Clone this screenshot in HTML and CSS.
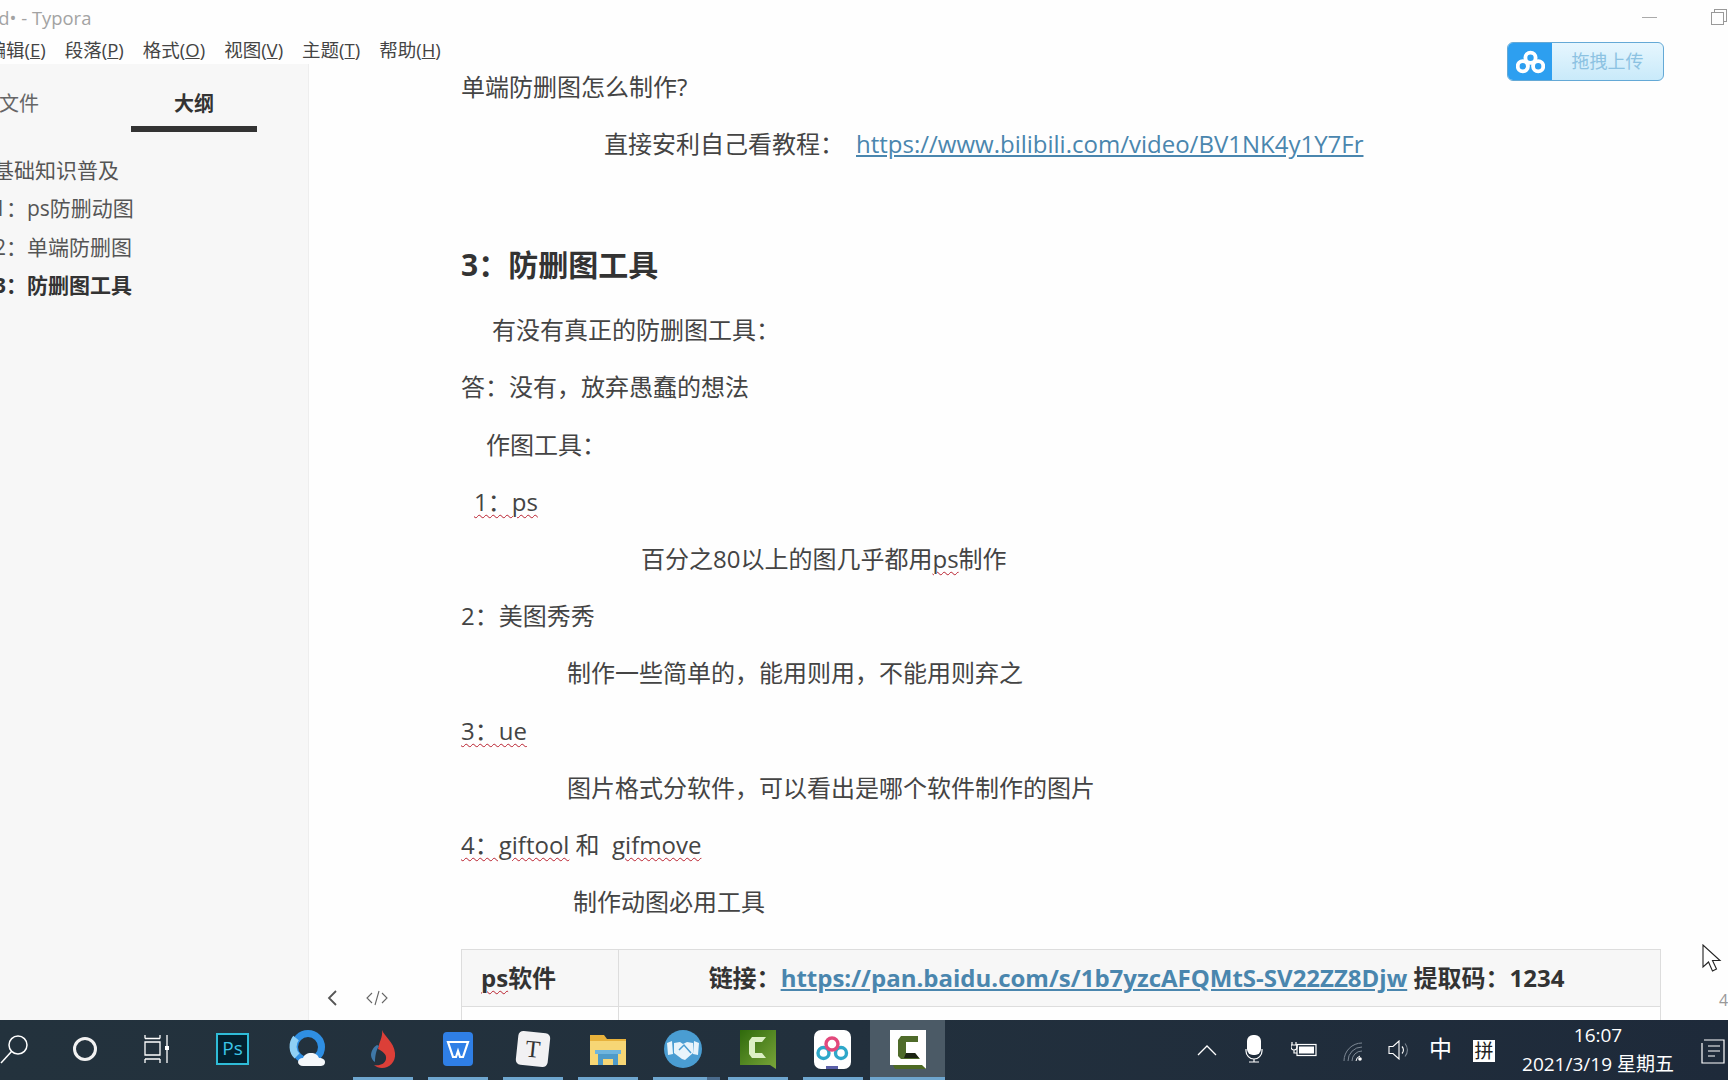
FILE: index.html
```html
<!DOCTYPE html>
<html lang="zh-CN">
<head>
    <meta charset="UTF-8">
    <title>Typora</title>
    <link rel="stylesheet" href="styles.css">
</head>
<body>
    <div class="window">
        <div class="titlebar">
            <span class="title">ed• - Typora</span>
            <div class="win-controls">
                <span class="win-min"></span>
                <span class="win-restore"></span>
            </div>
        </div>

        <div class="menubar">
            <span>编辑(<u>E</u>)</span>
            <span>段落(<u>P</u>)</span>
            <span>格式(<u>O</u>)</span>
            <span>视图(<u>V</u>)</span>
            <span>主题(<u>T</u>)</span>
            <span>帮助(<u>H</u>)</span>
        </div>

        <div class="main">
            <aside class="sidebar">
                <div class="tabs">
                    <div class="tab">文件</div>
                    <div class="tab active">大纲</div>
                </div>
                <ul class="outline">
                    <li>基础知识普及</li>
                    <li class="sub">1&#xFF1A;ps防删动图</li>
                    <li class="sub">2&#xFF1A;单端防删图</li>
                    <li class="sub current">3&#xFF1A;防删图工具</li>
                </ul>
            </aside>

            <div class="content">
                <p>单端防删图怎么制作?</p>
                <p class="in-link">直接安利自己看教程&#xFF1A;<a class="doc-link" href="#">https://www.bilibili.com/video/BV1NK4y1Y7Fr</a></p>
                <h3>3&#xFF1A;防删图工具</h3>
                <p class="in-28">有没有真正的防删图工具&#xFF1A;</p>
                <p>答&#xFF1A;没有&#xFF0C;放弃愚蠢的想法</p>
                <p class="in-25">作图工具&#xFF1A;</p>
                <p class="in-13"><span class="typo">1&#xFF1A;ps</span></p>
                <p class="in-180">百分之80以上的图几乎都用<span class="typo">ps</span>制作</p>
                <p>2&#xFF1A;美图秀秀</p>
                <p class="in-106">制作一些简单的&#xFF0C;能用则用&#xFF0C;不能用则弃之</p>
                <p><span class="typo">3&#xFF1A;ue</span></p>
                <p class="in-106">图片格式分软件&#xFF0C;可以看出是哪个软件制作的图片</p>
                <p><span class="typo">4&#xFF1A;giftool</span> 和&nbsp;&nbsp;<span class="typo">gifmove</span></p>
                <p class="in-112">制作动图必用工具</p>

                <table class="soft-table">
                    <tr>
                        <th class="col-name"><span class="typo">ps</span>软件</th>
                        <th class="col-link">链接&#xFF1A;<a class="doc-link" href="#">https://pan.baidu.com/s/1b7yzcAFQMtS-SV22ZZ8Djw</a> 提取码&#xFF1A;1234</th>
                    </tr>
                    <tr>
                        <td class="col-name empty"></td>
                        <td class="empty"></td>
                    </tr>
                </table>
            </div>
        </div>
    </div>

    <!-- stuff lying over the window -->
    <div class="upload-btn">
        <span class="upload-logo">
            <svg width="29" height="24" viewBox="0 0 34 28" fill="none" stroke="#fff" stroke-width="4.5">
                <circle cx="17" cy="9" r="6"/>
                <circle cx="8" cy="19" r="6"/>
                <circle cx="26" cy="19" r="6"/>
            </svg>
        </span>
        <span class="upload-text">拖拽上传</span>
    </div>

    <svg class="bottom-icon back-icon" width="14" height="18" viewBox="0 0 14 18" fill="none" stroke="#555" stroke-width="1.8">
        <path d="M11 2 4 9l7 7"/>
    </svg>
    <svg class="bottom-icon code-icon" width="24" height="16" viewBox="0 0 24 16" fill="none" stroke="#666" stroke-width="1.1">
        <path d="M7 3 2 8l5 5M17 3l5 5-5 5M14 1l-4 14"/>
    </svg>
    <span class="word-count">4</span>

    <svg class="cursor" width="20" height="28" viewBox="0 0 20 28">
        <path d="M1 1v22l5.500-5 4 9 4-2-4-8.500H18z" fill="#fff" stroke="#222" stroke-width="1.100"/>
    </svg>

    <div class="taskbar">
        <div class="task-btn small">
            <svg width="34" height="34" viewBox="0 0 34 34" fill="none" stroke="#fff" stroke-width="1.500">
                <circle cx="21" cy="13" r="9"/>
                <path d="M14.500 19.500 4 31"/>
            </svg>
        </div>
        <div class="task-btn small">
            <span class="cortana"></span>
        </div>
        <div class="task-btn small">
            <svg width="26" height="30" viewBox="0 0 26 30" fill="none" stroke="#fff" stroke-width="1.300">
                <path d="M2 4.500h15M2 1v3.500M17 1v3.500M2 8h15v13H2zM2 25h15M2 25v4M17 25v4M24 1v28"/>
                <rect x="22" y="12" width="4" height="4" fill="#fff" stroke="none"/>
            </svg>
        </div>

        <div class="task-btn first-app">
            <span class="ps-icon">Ps</span>
        </div>
        <div class="task-btn">
            <svg width="38" height="40" viewBox="0 0 38 40">
                <circle cx="19" cy="18" r="13.500" fill="none" stroke="#2f8fe3" stroke-width="7"/>
                <path d="M7 9a13.500 13.500 0 0 0 1 18" fill="none" stroke="#8fd0f5" stroke-width="7"/>
                <path d="M14 37c-3 0-5-2-5-4s2-4 5-4c1-3 4-5 8-5 4 0 7 2 8 5 4 0 6 2 6 4 0 3-2 4-5 4z" fill="#f4f7fa"/>
            </svg>
            <span class="run-bar none"></span>
        </div>
        <div class="task-btn">
            <svg width="30" height="40" viewBox="0 0 30 40">
                <path d="M14 1c2 6 12 12 13 23 1 9-6 15-13 15-3 0-6-1-8-3 6 1 11-1 12-6 1-5-4-8-8-10 1-7 5-12 4-19z" fill="#dc3f38"/>
                <path d="M9 16c-4 2-6 7-6 10 0 3 2 6 4 7 0-5 1-12 4-16z" fill="#3f78a8"/>
            </svg>
            <span class="run-bar"></span>
        </div>
        <div class="task-btn">
            <svg width="32" height="36" viewBox="0 0 32 36">
                <rect x="1" y="1" width="30" height="34" rx="4" fill="#2f7fe6"/>
                <path d="M6 11h20l-5 15h-3l-2-6-2 6h-3z" fill="none" stroke="#fff" stroke-width="2.200"/>
            </svg>
            <span class="run-bar"></span>
        </div>
        <div class="task-btn">
            <span class="typora-icon">T</span>
            <span class="run-bar"></span>
        </div>
        <div class="task-btn">
            <svg width="38" height="34" viewBox="0 0 38 34">
                <path d="M1 3h14l3 4h19v25H1z" fill="#e8b23c"/>
                <rect x="1" y="9" width="36" height="24" fill="#f7d675"/>
                <path d="M9 33V21h20v12h-5v-6H14v6z" fill="#4f9bc9"/>
                <rect x="6" y="18" width="26" height="4" fill="#6fb5de"/>
            </svg>
            <span class="run-bar"></span>
        </div>
        <div class="task-btn">
            <svg width="38" height="38" viewBox="0 0 38 38">
                <circle cx="19" cy="19" r="19" fill="#4a9dd2"/>
                <path d="M3 13l5-2 1 13-5 1zM35 13l-5-2-1 13 5 1z" fill="#e8f4fb"/>
                <path d="M10 13l6-1 3 2 4-2 6 1 0 10-8 7-3-1-8-6z" fill="#e8f4fb"/>
                <path d="M15 20l5-5 7 8" fill="none" stroke="#4a9dd2" stroke-width="1.500"/>
            </svg>
            <span class="run-bar double"></span>
        </div>
        <div class="task-btn">
            <svg width="36" height="39" viewBox="0 0 36 39">
                <defs>
                    <linearGradient id="camGreen" x1="0" y1="0" x2="1" y2="1">
                        <stop offset="0" stop-color="#2f6a0c"/>
                        <stop offset="1" stop-color="#7aa63a"/>
                    </linearGradient>
                </defs>
                <path d="M0 0h36v39l-6-4H0z" fill="url(#camGreen)"/>
                <path d="M26 7H12L9 11v13l3 4h14l-4-5h-7V12h7z" fill="#dcefc4"/>
            </svg>
            <span class="run-bar"></span>
        </div>
        <div class="task-btn">
            <svg width="37" height="39" viewBox="0 0 37 39">
                <rect width="37" height="39" rx="7" fill="#fff"/>
                <g fill="none" stroke-width="3.400">
                    <circle cx="9.500" cy="23" r="5.500" stroke="#2ea7c9"/>
                    <circle cx="27" cy="23" r="5.500" stroke="#2ea7c9"/>
                    <circle cx="18" cy="14" r="6" stroke="#e2497c"/>
                </g>
                <rect x="12" y="36" width="12" height="3" fill="#5a5fa8"/>
            </svg>
            <span class="run-bar"></span>
        </div>
        <div class="task-btn active">
            <svg width="36" height="39" viewBox="0 0 36 39">
                <path d="M0 0h36v39l-5-4H4l-4-0z" fill="#fff"/>
                <path d="M3 35h29l4 4H5z" fill="#4d6a24"/>
                <path d="M28 6H11L8 10v16l3 3h19l-5-6h-9V12h12z" fill="#4f6b2a"/>
                <path d="M16 23h9l4 5H14z" fill="#1c2414"/>
            </svg>
            <span class="run-bar full"></span>
        </div>

        <div class="tray">
            <svg class="tray-up" width="20" height="12" viewBox="0 0 20 12" fill="none" stroke="#fff" stroke-width="1.300">
                <path d="M1 11 10 2l9 9"/>
            </svg>
            <svg class="tray-mic" width="18" height="28" viewBox="0 0 18 28">
                <rect x="2" y="0" width="14" height="20" rx="6" fill="#fff"/>
                <path d="M1 14v2a8 8 0 0 0 16 0v-2M9 24v3M4 27h10" fill="none" stroke="#fff" stroke-width="1.200"/>
            </svg>
            <svg class="tray-power" width="26" height="16" viewBox="0 0 26 16" fill="none" stroke="#fff" stroke-width="1.200">
                <rect x="6" y="3.500" width="19" height="11"/>
                <rect x="8" y="5.500" width="15" height="7" fill="#fff" stroke="none"/>
                <path d="M1 1v3M5 1v3M0 4h6v2a3 3 0 0 1-6 0zM3 9v3h3"/>
            </svg>
            <svg class="tray-wifi" width="22" height="20" viewBox="0 0 22 20" fill="none" stroke="#7d8894" stroke-width="1">
                <path d="M1 19A18 18 0 0 1 19 1M5 19A14 14 0 0 1 19 5M9 19a10 10 0 0 1 10-10"/>
                <path d="M13 19a6 6 0 0 1 4-5" stroke="#fff"/>
                <circle cx="17" cy="17" r="1.800" fill="#fff" stroke="none"/>
            </svg>
            <svg class="tray-vol" width="22" height="20" viewBox="0 0 22 20" fill="none" stroke="#fff" stroke-width="1.100">
                <path d="M1 6.500h4L11 1v18l-6-5.500H1z"/>
                <path d="M14 6.500a5 5 0 0 1 0 7"/>
                <path d="M17 3.500a10 10 0 0 1 0 13" stroke="#7d8894"/>
            </svg>
            <span class="ime-lang">中</span>
            <span class="ime-mode">拼</span>
            <div class="clock">
                <span>16:07</span>
                <span>2021/3/19 星期五</span>
            </div>
            <svg class="tray-notify" width="24" height="26" viewBox="0 0 24 26" fill="none" stroke="#fff" stroke-width="1.200">
                <path d="M3 2h20v23H1V5"/>
                <path d="M7 8h12M7 13h12M7 18h7"/>
            </svg>
        </div>
    </div>
</body>
</html>
```

FILE: styles.css
```css
* {
    margin: 0;
    padding: 0;
    box-sizing: border-box;
}

html,
body {
    width: 1728px;
    height: 1080px;
    overflow: hidden;
}

body {
    position: relative;
    font-family: "Open Sans", "Noto Sans CJK SC", sans-serif;
    background: #fefefe;
    color: #444;
    display: flex;
    flex-direction: column;
}

/* the real window starts a bit left of the screen */
.window {
    width: 1752px;
    height: 1020px;
    margin-left: -24px;
    display: flex;
    flex-direction: column;
    overflow: hidden;
}

.titlebar {
    height: 34px;
    flex-shrink: 0;
    display: flex;
    align-items: center;
    justify-content: space-between;
}

.title {
    font-size: 18.400px;
    color: #a3a3a3;
    margin-left: 12px;
}

.win-controls {
    display: flex;
    align-items: center;
    gap: 54px;
    margin-right: 4px;
}

.win-min {
    width: 15px;
    height: 1px;
    background: #aaa;
}

.win-restore {
    width: 13px;
    height: 13px;
    margin-top: 3px;
    border: 1px solid #999;
    box-shadow: 3px -3px 0 -1px #fefefe, 3px -3px 0 0 #999;
}

.menubar {
    height: 30px;
    flex-shrink: 0;
    display: flex;
    align-items: center;
    gap: 19px;
    padding-left: 11.500px;
    font-size: 18.500px;
    color: #444;
}

.main {
    flex: 1;
    display: flex;
    min-height: 0;
}

.sidebar {
    width: 333px;
    flex-shrink: 0;
    background: #f7f7f7;
    border-right: 1px solid #eee;
}

.tabs {
    display: flex;
    height: 68px;
    margin-left: -20px;
    gap: 49px;
}

.tab {
    width: 126px;
    height: 68px;
    padding-top: 26px;
    text-align: center;
    font-size: 20px;
    line-height: 28px;
    color: #666;
}

.tab.active {
    font-weight: 700;
    color: #333;
    border-bottom: 6px solid #333;
}

.outline {
    list-style: none;
    margin-top: 19px;
    font-size: 21px;
    color: #555;
}

.outline li {
    height: 38.300px;
    line-height: 38px;
    padding-left: 17px;
    white-space: nowrap;
}

.outline .sub {
    padding-left: 18px;
}

.outline .current {
    font-weight: 700;
    color: #333;
}

.content {
    flex: 1;
    padding: 5px 0 0 152px;
    background: #fefefe;
    font-size: 24px;
    overflow: hidden;
}

.content p {
    height: 36px;
    line-height: 36px;
    margin-bottom: 21.200px;
    white-space: nowrap;
}

.content h3 {
    font-size: 30px;
    line-height: 42px;
    font-weight: 700;
    color: #333;
    margin: 82px 0 26px;
}

.in-link { padding-left: 143px; }
.in-28 { padding-left: 31px; }
.in-25 { padding-left: 25px; }
.in-13 { padding-left: 13px; }
.in-180 { padding-left: 180px; }
.in-106 { padding-left: 106px; }
.in-112 { padding-left: 112px; }

.doc-link {
    color: #4a86ae;
    text-decoration: underline;
}

.in-link .doc-link {
    margin-left: 12px;
}

.typo {
    text-decoration: underline wavy #b8202e 1px;
    text-underline-offset: 3px;
}

.soft-table {
    width: 1200px;
    margin-top: 29px;
    border-collapse: collapse;
    font-size: 24px;
}

.soft-table th {
    height: 57px;
    padding-bottom: 3px;
    background: #f7f7f7;
    border: 1px solid #ddd;
    font-weight: 700;
    color: #333;
    text-align: center;
    white-space: nowrap;
}

.soft-table th.col-name {
    text-align: left;
    padding-left: 19px;
}

.soft-table th.col-link {
    padding-right: 6px;
}

.soft-table .col-name {
    width: 157px;
}

.soft-table td {
    border: 1px solid #ddd;
}

.soft-table .empty {
    height: 60px;
}

/* overlays */
.upload-btn {
    position: absolute;
    left: 1507px;
    top: 42px;
    width: 157px;
    height: 39px;
    display: flex;
    border: 1px solid #64a9d6;
    border-radius: 6px;
    overflow: hidden;
    background: linear-gradient(#e6f6fe, #c9eafa);
}

.upload-logo {
    width: 44px;
    background: #2d9ff0;
    display: flex;
    align-items: center;
    justify-content: center;
}

.upload-text {
    flex: 1;
    text-align: center;
    font-size: 18px;
    line-height: 37px;
    color: #8cc2e2;
}

.bottom-icon {
    position: absolute;
}

.back-icon {
    left: 325px;
    top: 989px;
}

.code-icon {
    left: 365px;
    top: 990px;
}

.word-count {
    position: absolute;
    left: 1719px;
    top: 989px;
    font-size: 16px;
    color: #999;
}

.cursor {
    position: absolute;
    left: 1702px;
    top: 944px;
}

.taskbar {
    height: 60px;
    flex-shrink: 0;
    display: flex;
    align-items: stretch;
    margin-left: -22px;
    width: 1750px;
    background: linear-gradient(90deg, #23323d 0%, #22303d 50%, #1e2a3a 100%);
    color: #fff;
}

.task-btn {
    position: relative;
    width: 75px;
    display: flex;
    align-items: center;
    justify-content: center;
    padding-bottom: 2px;
}

.task-btn.small {
    width: 71px;
}

.task-btn.first-app {
    margin-left: 4px;
}

.task-btn.active {
    background: #4b5a66;
}

.run-bar {
    position: absolute;
    left: 8px;
    right: 7px;
    bottom: 0;
    height: 3px;
    background: #6ea6cf;
}

.run-bar.none {
    display: none;
}

.run-bar.full {
    left: 0;
    right: 0;
}

.run-bar.double {
    right: 0;
    background: linear-gradient(90deg, #6ea6cf 80%, #4a6b8c 80%);
}

.cortana {
    width: 24px;
    height: 24px;
    border: 3.500px solid #f2f2f2;
    border-radius: 50%;
}

.ps-icon {
    width: 33px;
    height: 32px;
    border: 2px solid #2fbcd8;
    background: #03202e;
    color: #3cc6e8;
    font-size: 19px;
    line-height: 27px;
    text-align: center;
}

.typora-icon {
    width: 32px;
    height: 34px;
    background: #f1f1f3;
    border-radius: 5px;
    transform: rotate(6deg);
    color: #333;
    font-family: "Liberation Serif", serif;
    font-size: 24px;
    line-height: 34px;
    text-align: center;
}

.tray {
    flex: 1;
    position: relative;
}

.tray > * {
    position: absolute;
}

.tray-up { left: 252px; top: 24px; }
.tray-mic { left: 300px; top: 15px; }
.tray-power { left: 346px; top: 21px; }
.tray-wifi { left: 398px; top: 22px; }
.tray-vol { left: 443px; top: 20px; }

.ime-lang {
    left: 484px;
    top: 11px;
    font-size: 23px;
    line-height: 34px;
}

.ime-mode {
    left: 528px;
    top: 20px;
    width: 22px;
    height: 22px;
    background: #fff;
    color: #222;
    font-size: 19px;
    line-height: 22px;
    text-align: center;
}

.clock {
    left: 568px;
    top: 0;
    width: 170px;
    height: 60px;
    display: flex;
    flex-direction: column;
    align-items: center;
    justify-content: center;
    gap: 4px;
    font-size: 19px;
    line-height: 25px;
    white-space: nowrap;
}

.tray-notify {
    left: 756px;
    top: 18px;
}
```
